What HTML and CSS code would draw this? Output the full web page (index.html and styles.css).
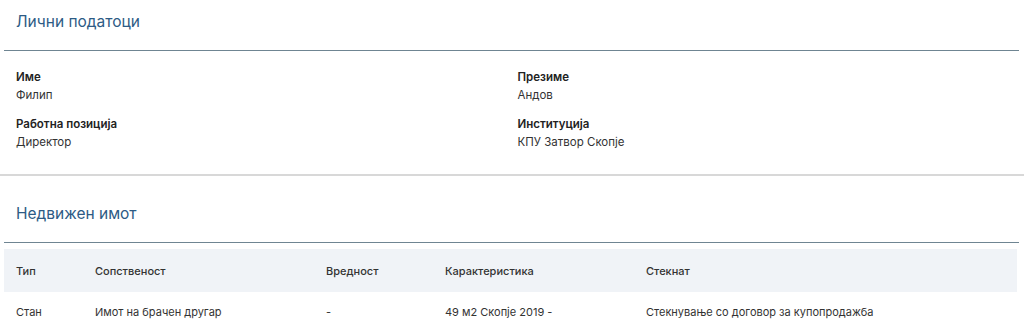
FILE: index.html
```html
<!DOCTYPE html>
<html lang="mk">
<head>
<meta charset="utf-8">
<link rel="stylesheet" href="styles.css">
</head>
<body>
<section class="section">
  <div class="section-head"><h2 class="section-title">Лични податоци</h2></div>
  <div class="fields">
    <div class="field"><div class="label">Име</div><div class="value">Филип</div></div>
    <div class="field"><div class="label">Презиме</div><div class="value">Андов</div></div>
    <div class="field"><div class="label">Работна позиција</div><div class="value">Директор</div></div>
    <div class="field"><div class="label">Институција</div><div class="value">КПУ Затвор Скопје</div></div>
  </div>
</section>
<hr class="divider">
<section class="section">
  <div class="section-head"><h2 class="section-title">Недвижен имот</h2></div>
  <table class="data">
    <colgroup>
      <col class="c1"><col class="c2"><col class="c3"><col class="c4"><col class="c5">
    </colgroup>
    <thead>
      <tr><th>Тип</th><th>Сопственост</th><th>Вредност</th><th>Карактеристика</th><th>Стекнат</th></tr>
    </thead>
    <tbody>
      <tr><td>Стан</td><td>Имот на брачен другар</td><td>-</td><td>49 м2 Скопје 2019 -</td><td>Стекнување со договор за купопродажба</td></tr>
    </tbody>
  </table>
</section>
</body>
</html>
```
FILE: styles.css
```css
* { box-sizing: border-box; }
html, body { margin: 0; padding: 0; background: #fff; }
body {
  font-family: Inter, "Noto Sans", "DejaVu Sans", sans-serif;
  color: #333;
  font-size: 11.5px;
  height: 331px;
  overflow: hidden;
}
.section { margin: 0 5px 0 4px; }
.section-head {
  padding: 12px 12px 18px;
  border-bottom: 1px solid #6f8592;
}
.section-title {
  margin: 0;
  font-size: 15.5px;
  line-height: 20px;
  font-weight: 400;
  color: #2d5b85;
}
.fields {
  display: grid;
  grid-template-columns: 1fr 1fr;
  column-gap: 12px;
  row-gap: 10px;
  padding: 17px 12px 22px;
}
.label { font-weight: 600; line-height: 18px; color: #222; }
.value { line-height: 19px; color: #333; }
.divider {
  margin: 0;
  border: 0;
  height: 2px;
  background: #d8d8d8;
}
.divider + .section .section-head { padding-top: 28px; }
.data {
  width: 1013px;
  margin-top: 6px;
  border-collapse: collapse;
  table-layout: fixed;
  font-size: 11px;
}
.c1 { width: 79px; }
.c2 { width: 231px; }
.c3 { width: 119px; }
.c4 { width: 201px; }
.data th {
  text-align: left;
  font-weight: 500;
  color: #333;
  background: #f0f3f7;
  height: 43px;
  padding: 0 12px;
}
.data td {
  height: 40px;
  padding: 0 12px;
  color: #333;
}
```
